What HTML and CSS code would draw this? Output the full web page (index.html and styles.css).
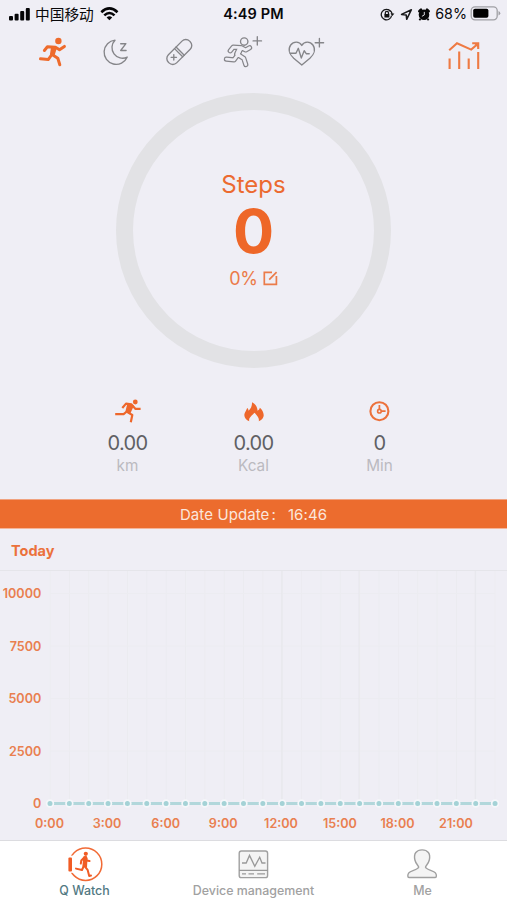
FILE: index.html
```html
<!DOCTYPE html>
<html lang="en">
<head>
<meta charset="utf-8">
<title>Q Watch</title>
<link rel="stylesheet" href="styles.css">
</head>
<body>
<div class="app">
  <header class="status">
    <div class="status-left">
      <svg width="22" height="14" viewBox="9 6 22 14"><g fill="#050507"><rect x="9" y="15" width="4" height="4.5" rx="1"/><rect x="14.6" y="12.8" width="4" height="6.7" rx="1"/><rect x="20.2" y="10" width="4" height="9.5" rx="1"/><rect x="25.8" y="7" width="4" height="12.5" rx="1"/></g></svg>
      <span class="carrier">中国移动</span>
      <svg width="20" height="14" viewBox="100 6 20 14"><g fill="none" stroke="#050507" stroke-width="2.6"><path d="M101.3 11.2Q109.4 3.6 117.5 11.2"/><path d="M104.3 14.4Q109.4 9.6 114.5 14.4"/></g><path d="M106.6 16.4Q109.4 14 112.2 16.4L109.4 19.3Z" fill="#050507"/></svg>
    </div>
    <span class="clock">4:49 PM</span>
    <div class="status-right">
      <svg width="56" height="14" viewBox="378 6 56 14">
        <g fill="none" stroke="#18181a" stroke-width="1.3"><path d="M390.6 10.5A5.2 5.2 0 1 0 391.6 14.5M388 8.7A5.2 5.2 0 0 1 392 13"/><path d="M385.3 13.5V12a1.6 1.6 0 0 1 3.2 0v1.5"/></g>
        <rect x="384.4" y="13" width="5" height="3.6" rx=".6" fill="#111"/><path d="M390.4 12.5h4l-2 2.6Z" fill="#111"/>
        <path d="M401.5 13.4L411.4 8.7L406.7 18.3L406.2 13.9Z" fill="none" stroke="#18181a" stroke-width="1.5" stroke-linejoin="round"/>
        <circle cx="424" cy="13.8" r="5.3" fill="#080808"/><path d="M419.4 10.2L421 8.8M428.6 10.2L427 8.8" stroke="#080808" stroke-width="2.8" stroke-linecap="round"/><path d="M420.4 17.8L419.4 19.3M427.6 17.8L428.6 19.3" stroke="#080808" stroke-width="1.8"/><path d="M424.3 10.9V14L421.9 15.3" fill="none" stroke="#efeef5" stroke-width=".9"/>
      </svg>
      <span class="percent">68%</span>
      <svg width="31" height="15" viewBox="470 6 31 15"><rect x="471.2" y="6.8" width="26" height="13" rx="3.8" fill="none" stroke="#a0a0a5" stroke-width="1.3"/><rect x="473.2" y="8.8" width="15.2" height="9" rx="1.8"/><path d="M498.5 11v4.4q1.8-.7 1.8-2.2t-1.8-2.2" fill="#a0a0a5"/></svg>
    </div>
  </header>

  <nav class="modes">
    <svg class="mode" viewBox="21 30 63 48"><g fill="none" stroke="#ee6b2c" stroke-width="3" stroke-linecap="round" stroke-linejoin="round"><path d="M44.4 50.5L47.4 46.8L55.5 47.3L59.5 49.8L64.4 46.4"/><path d="M55 48L51.7 54.3L57.8 58.3L59.8 64.7"/><path d="M51.5 55L48.2 59.6L40.5 58.8"/></g><path d="M51 47L57 47.5L54.5 55.5L50 54.5Z" fill="#ee6b2c"/><circle cx="58.4" cy="41" r="3.2" fill="#ee6b2c"/></svg>
    <svg class="mode" viewBox="84 30 63 48"><g class="line"><path d="M115 40.2A12.1 12.1 0 1 0 127.3 57.1A10.6 10.6 0 0 1 115 40.2Z"/><path d="M120.7 43.7h5.2l-5.2 6.8h5.4"/></g></svg>
    <svg class="mode" viewBox="147 30 63 48"><g class="line" transform="rotate(-45 179.3 52)"><rect x="164.3" y="46.2" width="30" height="11.6" rx="5.4"/><path d="M178.3 46.2V57.8M180.5 46.2V57.8"/></g><path class="line" d="M173.8 54.6v5.4M171.1 57.3h5.4"/></svg>
    <svg class="mode" viewBox="210 30 63 48"><g stroke-linecap="round" stroke-linejoin="round" fill="none"><g stroke="#858589" stroke-width="5.2"><path d="M230.2 50.8L233.2 47.2L241 47.6L245.7 50L249.6 47.8M240.8 48.5L237.8 54.5L243.8 58.5L245.8 64.6M237.6 55L234 59.9L226.4 59.2"/><path d="M239.8 49L237.4 54" stroke-width="6.6"/></g><g stroke="#efeef5" stroke-width="2.8"><path d="M230.2 50.8L233.2 47.2L241 47.6L245.7 50L249.6 47.8M240.8 48.5L237.8 54.5L243.8 58.5L245.8 64.6M237.6 55L234 59.9L226.4 59.2"/><path d="M239.8 49L237.4 54" stroke-width="4.2"/></g></g><circle class="line" cx="244.2" cy="41.5" r="3.7"/><path class="line" d="M257.3 36.7v8.4M253.1 40.9h8.4"/></svg>
    <svg class="mode" viewBox="273 30 63 48"><g class="line"><path d="M301.8 45.5C299.3 41.1 293.5 41.2 290.7 45C287.6 49.4 289.6 54.5 293.7 58.2L301.8 65L309.9 58.2C314 54.5 316 49.4 312.9 45C310.1 41.2 304.3 41.1 301.8 45.5Z"/><path d="M290.2 53.2H296L298.3 48.3L301.3 58L304.2 50.7L306.2 53.7H309.2"/><path d="M319.4 38.5v8.4M315.2 42.7h8.4"/></g></svg>
    <svg class="trend" width="42" height="36" viewBox="443 36 42 36"><g fill="none" stroke="#ee7a43" stroke-width="2.1"><path d="M449.2 50.2L457 43.3L471.2 49.6L478 43.8"/><path d="M472.2 43.3H478.2V49"/><path d="M449.6 58.5V69M459.2 51.5V69M468.7 58.5V69M478.2 52V69"/></g><path d="M473.5 43h5v5Z" fill="#ee7a43"/></svg>
  </nav>

  <section class="goal">
    <div class="ring">
      <span class="ring-title">Steps</span>
      <strong class="ring-value">0</strong>
      <div class="ring-percent"><span>0%</span><svg width="15" height="15" viewBox="0 0 15 15"><path d="M9 1.3H1.3V13.4H13.4V5M6.2 8.6L13.6 1.2" fill="none" stroke="#eb7b49" stroke-width="1.7"/></svg></div>
    </div>
  </section>

  <section class="stats">
    <div class="stat">
      <svg width="32" height="26" viewBox="112 398 32 26"><g fill="none" stroke="#ee672b" stroke-width="2.2" stroke-linejoin="round"><path d="M122.3 408L126 403.6L131.5 404.4L135.3 408.8H140.6"/><path d="M132 405.5L127.8 412.4L132.3 415L130.8 422.2"/><path d="M126.8 411.5L123.6 414.2H115.2"/></g><path d="M127.5 403L134 405.4L130.2 413.8L125.4 411.4Z" fill="#ee672b"/><circle cx="135.3" cy="402" r="2.4" fill="#ee672b"/></svg>
      <span class="stat-value">0.00</span><span class="stat-unit">km</span>
    </div>
    <div class="stat">
      <svg width="32" height="26" viewBox="238 398 32 26"><path d="M249.3 421.3C245.6 419.8 243.6 417 244.6 413.6C245.2 411.6 246.4 410.3 247.2 408C248.1 408.7 248.5 409.7 248.6 410.7C251.1 408.3 252.2 405.3 252 402.2C255.7 404 257.4 407.3 257.6 410.7C259 410 259.7 409 259.8 407.8C261.8 409 264.4 413.4 263.5 416.6C262.8 419.2 260.9 420.5 258.7 421.3C259.8 418 256.8 415.8 254.6 412.8C252.2 415.3 248.2 418 249.3 421.3Z" fill="#ee672b"/></svg>
      <span class="stat-value">0.00</span><span class="stat-unit">Kcal</span>
    </div>
    <div class="stat">
      <svg width="32" height="26" viewBox="364 398 32 26"><g fill="none" stroke="#ec713b"><circle cx="379.4" cy="411.2" r="9" stroke-width="2.1"/><circle cx="379.4" cy="411.2" r="1.8" stroke-width="1.6"/><path d="M379.4 405v4.4M381.2 411.2h4.4" stroke-width="1.7"/></g></svg>
      <span class="stat-value">0</span><span class="stat-unit">Min</span>
    </div>
  </section>

  <div class="banner"><span>Date Update<span class="colon">:</span></span><span>16:46</span></div>
  <h2 class="today">Today</h2>

  <svg class="chart" width="507" height="269" viewBox="0 571 507 269">
    <defs><pattern id="hours" x="49.6" y="571" width="19.35" height="270" patternUnits="userSpaceOnUse"><path d="M.5 0V270" stroke="#ebebf0"/></pattern></defs>
    <rect x="49.6" y="571" width="446" height="232" fill="url(#hours)"/>
    <path d="M50 593.5H495M50 646H495M50 698.5H495M50 751H495" stroke="#ececf1"/>
    <path d="M281.8 571V803M359 571V803M475.2 571V803" stroke="#e7e7ec"/>
    <path d="M50 803.5H495" stroke="#b2d7db" stroke-width="2.8"/>
    <path d="M50 803.5H495.3" stroke="#f5f7fa" stroke-width="8.4" stroke-linecap="round" stroke-dasharray="0 19.35"/>
    <path d="M50 803.5H495.3" stroke="#a4d2d6" stroke-width="5" stroke-linecap="round" stroke-dasharray="0 19.35"/>
    <g class="axis" text-anchor="end"><text x="41.3" y="598.3">10000</text><text x="41.3" y="650.8">7500</text><text x="41.3" y="703.3">5000</text><text x="41.3" y="755.8">2500</text><text x="41.3" y="808.3">0</text></g>
    <g class="axis" text-anchor="middle"><text x="49.5" y="828">0:00</text><text x="107" y="828">3:00</text><text x="165.7" y="828">6:00</text><text x="223.2" y="828">9:00</text><text x="281" y="828">12:00</text><text x="340" y="828">15:00</text><text x="397.5" y="828">18:00</text><text x="456" y="828">21:00</text></g>
  </svg>

  <footer class="tabs">
    <div class="tab active">
      <svg width="40" height="38" viewBox="65 844 40 38"><circle cx="85.6" cy="863.2" r="16.2" fill="none" stroke="#f16b36" stroke-width="1.5"/><rect x="67.4" y="854.6" width="5.8" height="17.2" fill="#fff"/><rect x="68.4" y="856.4" width="3.6" height="14" rx="1" fill="#f15c25"/><g fill="none" stroke="#f15c25" stroke-width="2" stroke-linecap="round" stroke-linejoin="round"><path d="M84.5 856.2L81.3 859.5L80.8 862.6"/><path d="M86 856L86.7 859.6L89.5 860"/><path d="M84.5 865L87.6 868.8L89.2 875L91 874.6"/><path d="M83.8 865L82 869L76 867.6"/></g><path d="M83.3 855.8Q86 854 87.5 857L87 866.5L82.4 865.5Z" fill="#f15c25"/><circle cx="85.8" cy="852.8" r="2.1" fill="#f15c25"/></svg>
      <span>Q Watch</span>
    </div>
    <div class="tab">
      <svg width="40" height="38" viewBox="234 844 40 38"><rect x="239.2" y="850" width="28.4" height="26.6" rx="2.2" fill="#f4f4f4" stroke="#a0a0a0" stroke-width="1.4"/><path d="M239 869.3H268M242 862H246.2L249.5 854.4L254.8 865.4L259.7 856.2L262 862H265.5M242 872.9H246M248.5 872.9H254M257.2 872.9H265" fill="none" stroke="#999" stroke-width="1.3"/></svg>
      <span>Device management</span>
    </div>
    <div class="tab">
      <svg width="40" height="38" viewBox="403 844 40 38"><path d="M409 876.5C407.5 876.5 407.4 873.7 408.8 871.8C410.5 869.4 418 869 418.7 866.2C418.8 865 415.8 863 414.9 859C413.4 852.5 416.5 848.9 422.1 848.9S430.8 852.5 429.3 859C428.4 863 425.4 865 425.5 866.2C426.2 869 433.7 869.4 435.4 871.8C436.8 873.7 436.7 876.5 435.2 876.5Z" fill="#f4f4f4" stroke="#a0a0a0" stroke-width="1.4"/></svg>
      <span>Me</span>
    </div>
  </footer>
</div>
</body>
</html>
```
FILE: styles.css
```css
* { box-sizing: border-box; }
body { margin: 0; background: #efeef5; font-family: Inter, "Noto Sans CJK SC", sans-serif; }
svg { display: block; flex: none; }
.app { width: 507px; height: 900px; display: flex; flex-direction: column; overflow: hidden; }

.status { height: 30px; display: grid; grid-template-columns: 1fr auto 1fr; align-items: center; padding: 0 6px 3px 9px; color: #08080a; }
.status-left, .status-right { display: flex; align-items: center; }
.status-right { justify-content: flex-end; }
.carrier { font-family: "Noto Sans CJK SC", sans-serif; font-size: 14.7px; line-height: 20px; margin: 0 6px 0 4px; }
.clock { font-size: 14.5px; font-weight: 600; letter-spacing: .15px; margin-right: 3px; }
.percent { font-size: 14.3px; margin: 0 3px 0 1px; }

.modes { height: 48px; display: flex; padding-left: 21px; }
.mode { width: 63px; height: 48px; }
.line { fill: none; stroke: #858589; stroke-width: 1.35; stroke-linecap: round; stroke-linejoin: round; }
.trend { margin: 6px 22px 0 auto; }

.goal { height: 312px; padding-top: 15px; display: flex; justify-content: center; }
.ring { width: 275px; height: 275px; border: 17px solid #e2e2e5; border-radius: 50%; display: flex; flex-direction: column; align-items: center; padding-top: 60px; color: #ec6a30; }
.ring-title { font-size: 24px; line-height: 30px; }
.ring-value { font-size: 61px; line-height: 62px; font-weight: 700; color: #ee6728; }
.ring-percent { display: flex; align-items: center; gap: 5px; font-size: 18px; line-height: 26px; margin-top: 4px; color: #eb7b49; }
.ring-percent span { letter-spacing: -.2px; }
.ring-percent svg { margin-bottom: 1px; }

.stats { height: 109px; display: grid; grid-template-columns: repeat(3, 126px); justify-content: center; padding-top: 8px; }
.stat { display: flex; flex-direction: column; align-items: center; }
.stat-value { font-size: 20px; line-height: 24px; margin-top: 7px; color: #5f6064; letter-spacing: -.6px; }
.stat-unit { font-size: 15.3px; line-height: 20px; margin-top: 1px; color: #bbbac0; }

.banner { height: 30px; display: flex; align-items: center; justify-content: center; gap: 12px; background: #ec6c2e; border-top: 1px solid #f0a27f; border-bottom: 1px solid #f4b59a; color: #fbe6dc; font-size: 15px; letter-spacing: .1px; }
.colon { margin-left: 2px; }
.today { height: 42px; margin: 0; padding-left: 11px; border-bottom: 1px solid #e5e5ea; color: #eb713b; font-size: 14.5px; line-height: 43px; font-weight: 700; }
.axis { fill: #e97f50; font-size: 12.6px; font-weight: 600; }

.tabs { height: 60px; display: grid; grid-template-columns: repeat(3, 1fr); background: #fff; border-top: 1px solid #dcdce0; padding-top: 4px; }
.tab { display: flex; flex-direction: column; align-items: center; color: #a1a1a1; font-size: 12.4px; font-weight: 500; line-height: 16px; }
.active { color: #527983; }
```
